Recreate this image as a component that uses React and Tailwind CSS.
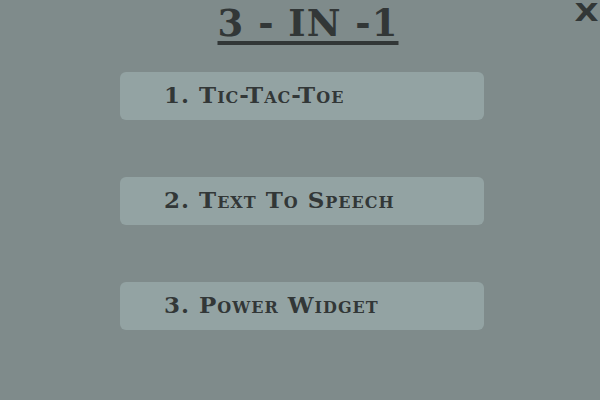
export default function App() {
  const items = ["1. Tic-Tac-Toe", "2. Text To Speech", "3. Power Widget"];

  return (
    <div className="relative w-[600px] h-[400px] bg-[#7f8b8b] overflow-hidden font-['DejaVu_Serif',serif] text-[#323737]">
      {/* Close */}
      <button className="absolute right-[4px] top-0 text-[25px] font-bold leading-none font-['DejaVu_Sans',sans-serif] scale-x-125">
        X
      </button>

      {/* Title */}
      <h1 className="text-center text-[37px] font-bold leading-none pt-[5px] pl-[16px]">
        <span className="underline decoration-[4px] underline-offset-[5px] tracking-[1px]">3 - IN -1</span>
      </h1>

      {/* Menu */}
      <div className="flex flex-col gap-[57px] mt-[30px] ml-[120px]">
        {items.map((t, i) => (
          <button
            key={i}
            className="w-[364px] h-[48px] rounded-[6px] bg-[#93a3a3] text-left pl-[44px] pb-[2px] text-[23px] font-bold [font-variant:small-caps] tracking-[1px]"
          >
            {t}
          </button>
        ))}
      </div>
    </div>
  );
}
